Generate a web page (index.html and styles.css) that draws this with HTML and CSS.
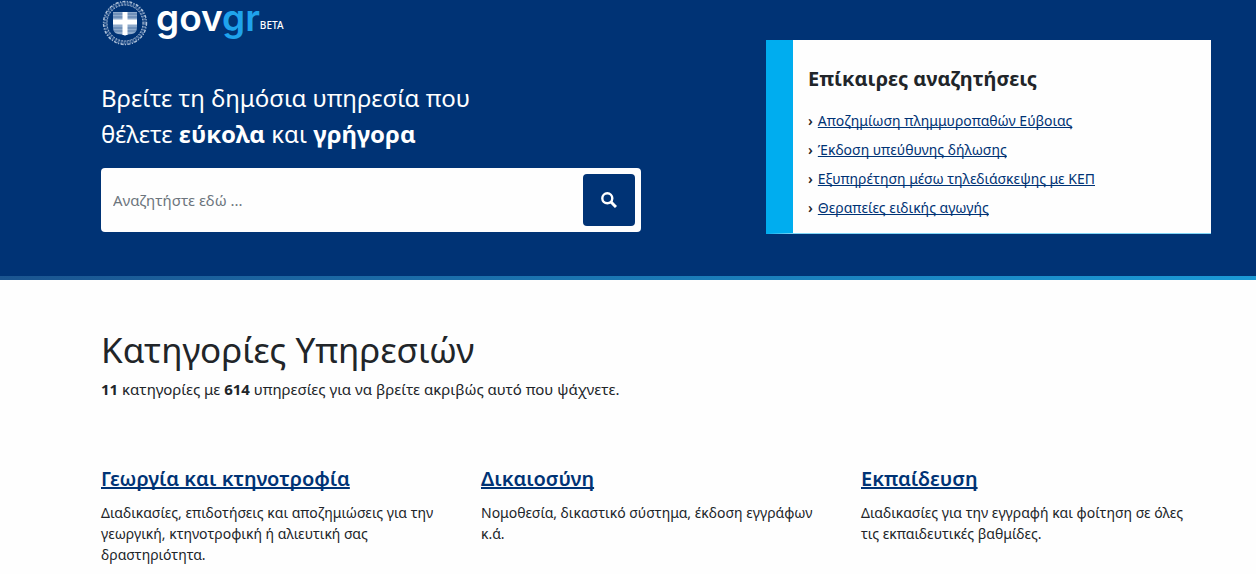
FILE: index.html
```html
<!DOCTYPE html>
<html lang="el">
<head>
    <meta charset="UTF-8">
    <meta name="viewport" content="width=device-width, initial-scale=1.0">
    <title>govgr</title>
    <link rel="stylesheet" href="styles.css">
</head>
<body>
    <header class="hero">
        <div class="container hero-row">
            <div class="hero-main">
                <a class="logo" href="#" aria-label="gov.gr beta">
                    <svg class="emblem" viewBox="0 0 46 46" fill="none" stroke="#dfe9f5">
                        <!-- wreath -->
                        <circle cx="23" cy="23" r="19.5" stroke-width="4" stroke-dasharray="2 1" opacity=".35"/>
                        <circle cx="23" cy="23" r="21.5" stroke-width="1.4" stroke-dasharray="3 1.5 1 1.5" opacity=".75"/>
                        <circle cx="23" cy="23" r="18" stroke-dasharray="1.5 1.5" opacity=".7"/>
                        <!-- shield -->
                        <path d="M11 12H35V27Q35 33 30 34Q25 34 23 36Q21 34 16 34Q11 33 11 27Z" fill="#8faacb" stroke="none"/>
                        <path d="M11 14H35M11 17H35M11 28H35M12 31H34" stroke="#5379a8"/>
                        <path d="M23 12V35M11 22H35" stroke="#fff" stroke-width="5"/>
                    </svg>
                    <span class="logo-text">gov<span class="logo-gr">gr</span></span>
                    <span class="logo-beta">BETA</span>
                </a>
                <h1 class="hero-title">Βρείτε τη δημόσια υπηρεσία που<br>θέλετε <strong>εύκολα</strong> και <strong>γρήγορα</strong></h1>
                <form class="search">
                    <input class="search-input" type="text" placeholder="Αναζητήστε εδώ ..." aria-label="Αναζητήστε εδώ">
                    <button class="search-btn" type="button" aria-label="Αναζήτηση">
                        <svg width="16" height="16" viewBox="0 0 16 16" fill="none" stroke="#fff">
                            <circle cx="6.3" cy="6.3" r="5" stroke-width="2.4"/>
                            <path d="M10 10L15 15" stroke-width="3"/>
                        </svg>
                    </button>
                </form>
            </div>
            <section class="trending">
                <h2>Επίκαιρες αναζητήσεις</h2>
                <ul>
                    <li><a href="#">Αποζημίωση πλημμυροπαθών Εύβοιας</a></li>
                    <li><a href="#">Έκδοση υπεύθυνης δήλωσης</a></li>
                    <li><a href="#">Εξυπηρέτηση μέσω τηλεδιάσκεψης με ΚΕΠ</a></li>
                    <li><a href="#">Θεραπείες ειδικής αγωγής</a></li>
                </ul>
            </section>
        </div>
    </header>

    <main class="container categories">
        <h2 class="categories-title">Κατηγορίες Υπηρεσιών</h2>
        <p class="categories-count"><strong>11</strong> κατηγορίες με <strong>614</strong> υπηρεσίες για να βρείτε ακριβώς αυτό που ψάχνετε.</p>
        <div class="category-grid">
            <article class="category">
                <h3><a href="#">Γεωργία και κτηνοτροφία</a></h3>
                <p>Διαδικασίες, επιδοτήσεις και αποζημιώσεις για την γεωργική, κτηνοτροφική ή αλιευτική σας δραστηριότητα.</p>
            </article>
            <article class="category">
                <h3><a href="#">Δικαιοσύνη</a></h3>
                <p>Νομοθεσία, δικαστικό σύστημα, έκδοση εγγράφων κ.ά.</p>
            </article>
            <article class="category">
                <h3><a href="#">Εκπαίδευση</a></h3>
                <p>Διαδικασίες για την εγγραφή και φοίτηση σε όλες τις εκπαιδευτικές βαθμίδες.</p>
            </article>
        </div>
    </main>
</body>
</html>
```

FILE: styles.css
```css
* {
    box-sizing: border-box;
}

body {
    margin: 0;
    font-family: "Noto Sans", sans-serif;
    font-size: 15px;
    color: #212529;
    background-color: #fefefe;
}

h1, h2, h3, p, ul {
    margin: 0;
    padding: 0;
}

a {
    color: #003375;
    text-decoration: underline;
    text-decoration-skip-ink: none;
}

.container {
    padding: 0 45px 0 101px;
}

.hero {
    background-color: #003375;
}

/* thin gradient line under the header */
.hero::after {
    content: "";
    display: block;
    height: 4px;
    background: linear-gradient(to right, #1b5590, #1b78b4 50%, #1b9ad6);
}

.hero-row {
    display: flex;
    justify-content: space-between;
    align-items: flex-start;
    padding-bottom: 42px;
}

.hero-main {
    flex: 0 1 540px;
}

.logo {
    display: flex;
    align-items: flex-start;
    height: 48px;
    color: #fff;
    text-decoration: none;
}

.emblem {
    width: 46px;
    height: 46px;
    margin-left: 1px;
}

.logo-text {
    margin-left: 8px;
    font-family: Inter, sans-serif;
    font-size: 37px;
    font-weight: 600;
    line-height: 36px;
}

.logo-gr {
    color: #1fa3ec;
}

.logo-beta {
    font-size: 10px;
    font-weight: 500;
    line-height: 14px;
    margin-top: 18px;
}

.hero-title {
    margin: 32px 0 16px;
    font-size: 24px;
    font-weight: 400;
    line-height: 36px;
    color: #fff;
}

.search {
    display: flex;
    height: 64px;
    padding: 6px;
    background-color: #fefefe;
    border-radius: 4px;
}

.search-input {
    flex: 1;
    min-width: 0;
    padding: 0 6px;
    border: none;
    outline: none;
    background: none;
    font-family: inherit;
    font-size: 15px;
    color: #212529;
}

.search-input::placeholder {
    color: #6c757d;
}

.search-btn {
    display: flex;
    align-items: center;
    justify-content: center;
    width: 52px;
    border: none;
    border-radius: 4px;
    background-color: #003375;
    cursor: pointer;
}

.trending {
    flex: 0 1 445px;
    margin-top: 40px;
    padding: 24px 15px 11px;
    background-color: #fefefe;
    border-left: 27px solid #00adef;
    border-bottom: 1px solid #7fd6f7;
}

.trending h2 {
    margin-bottom: 12px;
    font-size: 20px;
    font-weight: 700;
    line-height: 30px;
}

.trending ul {
    list-style: none;
}

.trending li {
    font-size: 14px;
    line-height: 29px;
}

.trending li::before {
    content: "›";
    margin-right: 5px;
    font-weight: 600;
}

.categories {
    padding-top: 46px;
}

.categories-title {
    font-size: 35px;
    font-weight: 400;
    line-height: 48px;
}

.categories-count {
    margin-top: 3px;
    line-height: 24px;
}

.category-grid {
    display: grid;
    grid-template-columns: repeat(3, 1fr);
    gap: 30px;
    margin-top: 64px;
}

.category h3 {
    font-size: 20px;
    font-weight: 600;
    line-height: 28px;
}

.category p {
    margin-top: 9px;
    padding-right: 12px;
    font-size: 14px;
    line-height: 21px;
}
```
